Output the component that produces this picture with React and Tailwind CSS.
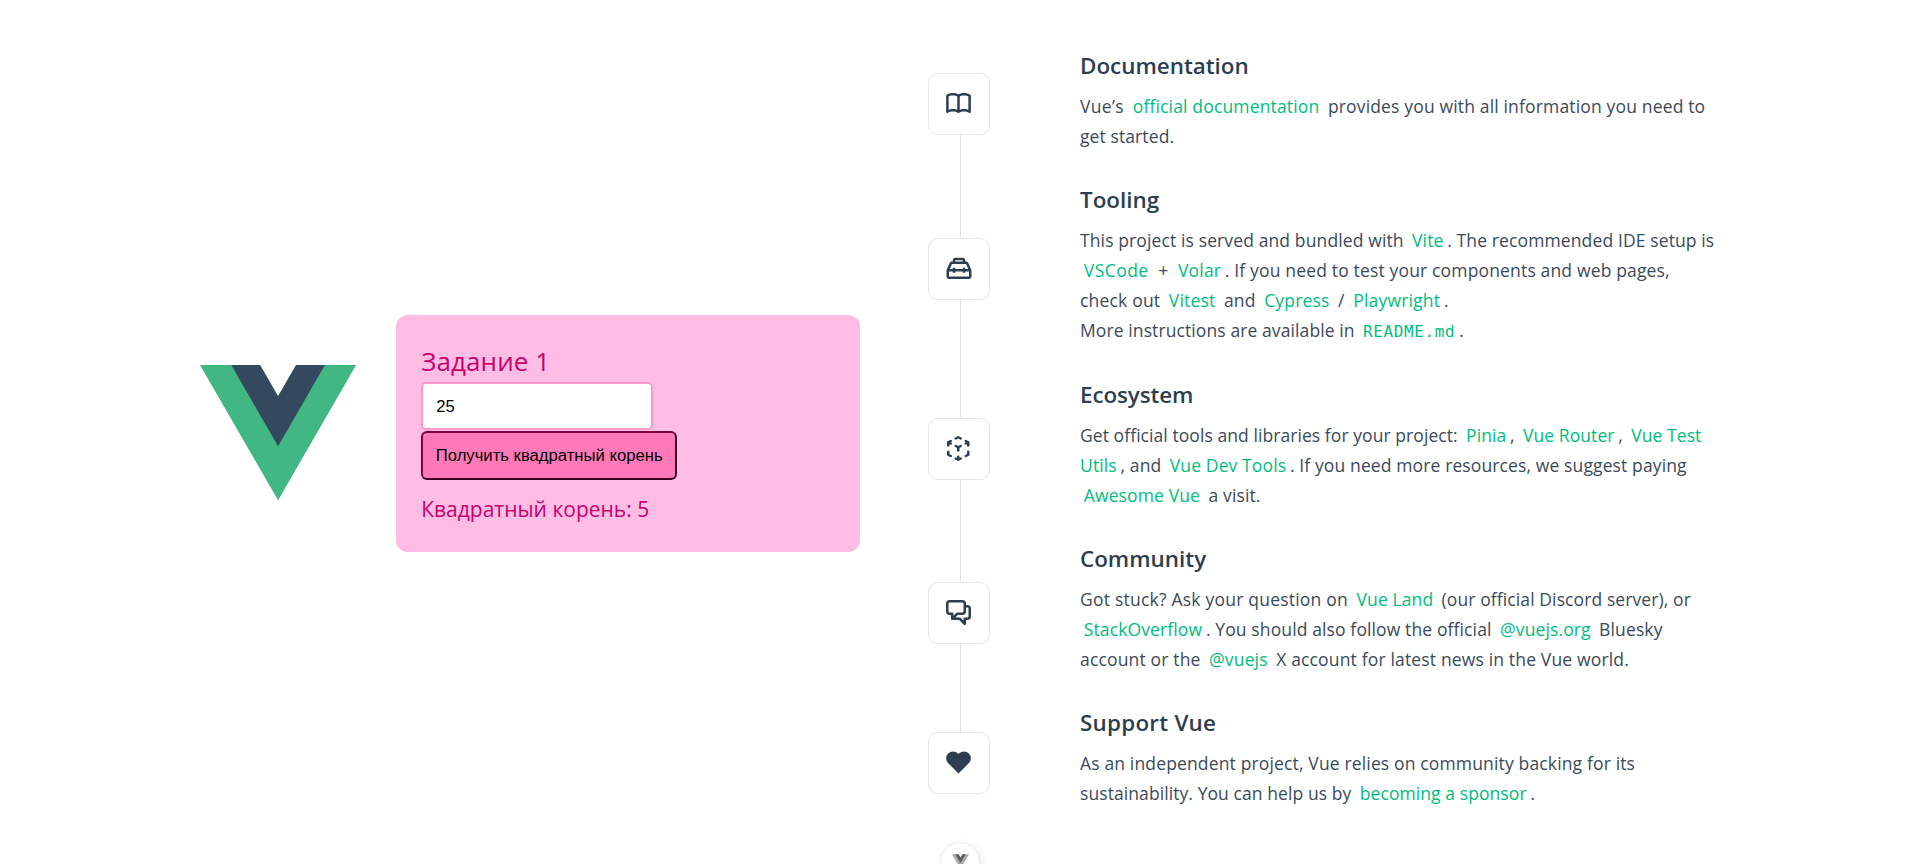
const ICONS = {
  documentation: {
    w: 20, h: 17, className: 'w-[25px] h-[21px]',
    d: 'M11 2.253a1 1 0 1 0-2 0h2zm-2 13a1 1 0 1 0 2 0H9zm.447-12.167a1 1 0 1 0 1.107-1.666L9.447 3.086zM1 2.253L.447 1.42A1 1 0 0 0 0 2.253h1zm0 13H0a1 1 0 0 0 1.553.833L1 15.253zm8.447.833a1 1 0 1 0 1.107-1.666l-1.107 1.666zm0-14.666a1 1 0 1 0 1.107 1.666L9.447 1.42zM19 2.253h1a1 1 0 0 0-.447-.833L19 2.253zm0 13l-.553.833A1 1 0 0 0 20 15.253h-1zm-9.553-.833a1 1 0 1 0 1.107 1.666L9.447 14.42zM9 2.253v13h2v-13H9zm1.553-.833C9.203.523 7.42 0 5.5 0v2c1.572 0 2.961.431 3.947 1.086l1.107-1.666zM5.5 0C3.58 0 1.797.523.447 1.42l1.107 1.666C2.539 2.431 3.928 2 5.5 2V0zM0 2.253v13h2v-13H0zm1.553 13.833C2.539 15.431 3.928 15 5.5 15v-2c-1.92 0-3.703.523-5.053 1.42l1.107 1.666zM5.5 15c1.572 0 2.961.431 3.947 1.086l1.107-1.666C9.203 13.523 7.42 13 5.5 13v2zm5.053-11.914C11.539 2.431 12.928 2 14.5 2V0c-1.92 0-3.703.523-5.053 1.42l1.107 1.666zM14.5 2c1.573 0 2.961.431 3.947 1.086l1.107-1.666C18.203.523 16.421 0 14.5 0v2zm3.5.253v13h2v-13h-2zm1.553 12.167C18.203 13.523 16.421 13 14.5 13v2c1.573 0 2.961.431 3.947 1.086l1.107-1.666zM14.5 13c-1.92 0-3.703.523-5.053 1.42l1.107 1.666C11.539 15.431 12.928 15 14.5 15v-2z',
  },
  tooling: {
    w: 24, h: 24, className: 'w-[30px] h-[30px]',
    d: 'M20 18v-4h-3v1h-2v-1H9v1H7v-1H4v4h16M6.33 8l-1.74 4H7v-1h2v1h6v-1h2v1h2.41l-1.74-4H6.33M9 5v1h6V5H9m12.84 7.61c.1.22.16.48.16.8V18c0 .53-.21 1-.6 1.41-.4.4-.85.59-1.4.59H4c-.55 0-1-.19-1.4-.59C2.21 19 2 18.53 2 18v-4.59c0-.32.06-.58.16-.8L4.5 7.22C4.84 6.41 5.45 6 6.33 6H7V5c0-.55.18-1 .57-1.41C7.96 3.2 8.44 3 9 3h6c.56 0 1.04.2 1.43.59.39.41.57.86.57 1.41v1h.67c.88 0 1.49.41 1.83 1.22l2.34 5.39z',
  },
  ecosystem: {
    w: 18, h: 20, className: 'w-[22.5px] h-[25px]',
    d: 'M11.447 8.894a1 1 0 1 0-.894-1.789l.894 1.789zm-2.894-.789a1 1 0 1 0 .894 1.789l-.894-1.789zm0 1.789a1 1 0 1 0 .894-1.789l-.894 1.789zM7.447 7.106a1 1 0 1 0-.894 1.789l.894-1.789zM10 9a1 1 0 1 0-2 0h2zm-2 2.5a1 1 0 1 0 2 0H8zm9.447-5.606a1 1 0 1 0-.894-1.789l.894 1.789zm-2.894-.789a1 1 0 1 0 .894 1.789l-.894-1.789zm2 .789a1 1 0 1 0 .894-1.789l-.894 1.789zm-1.106-2.789a1 1 0 1 0-.894 1.789l.894-1.789zM18 5a1 1 0 1 0-2 0h2zm-2 2.5a1 1 0 1 0 2 0h-2zm-5.447-4.606a1 1 0 1 0 .894-1.789l-.894 1.789zM9 1l.447-.894a1 1 0 0 0-.894 0L9 1zm-2.447.106a1 1 0 1 0 .894 1.789l-.894-1.789zm-6 3a1 1 0 1 0 .894 1.789L.553 4.106zm2.894.789a1 1 0 1 0-.894-1.789l.894 1.789zm-2-.789a1 1 0 1 0-.894 1.789l.894-1.789zm1.106 2.789a1 1 0 1 0 .894-1.789l-.894 1.789zM2 5a1 1 0 1 0-2 0h2zM0 7.5a1 1 0 1 0 2 0H0zm8.553 12.394a1 1 0 1 0 .894-1.789l-.894 1.789zm-1.106-2.789a1 1 0 1 0-.894 1.789l.894-1.789zm1.106 1a1 1 0 1 0 .894 1.789l-.894-1.789zm2.894.789a1 1 0 1 0-.894-1.789l.894 1.789zM8 19a1 1 0 1 0 2 0H8zm2-2.5a1 1 0 1 0-2 0h2zm-7.447.394a1 1 0 1 0 .894-1.789l-.894 1.789zM1 15H0a1 1 0 0 0 .553.894L1 15zm1-2.5a1 1 0 1 0-2 0h2zm12.553 2.606a1 1 0 1 0 .894 1.789l-.894-1.789zM17 15l.447.894A1 1 0 0 0 18 15h-1zm1-2.5a1 1 0 1 0-2 0h2zm-7.447-5.394l-2 1 .894 1.789 2-1-.894-1.789zm-1.106 1l-2-1-.894 1.789 2 1 .894-1.789zM8 9v2.5h2V9H8zm8.553-4.894l-2 1 .894 1.789 2-1-.894-1.789zm.894 0l-2-1-.894 1.789 2 1 .894-1.789zM16 5v2.5h2V5h-2zm-4.553-3.894l-2-1-.894 1.789 2 1 .894-1.789zm-2.894-1l-2 1 .894 1.789 2-1L8.553.106zM1.447 5.894l2-1-.894-1.789-2 1 .894 1.789zm-.894 0l2 1 .894-1.789-2-1-.894 1.789zM0 5v2.5h2V5H0zm9.447 13.106l-2-1-.894 1.789 2 1 .894-1.789zm0 1.789l2-1-.894-1.789-2 1 .894 1.789zM10 19v-2.5H8V19h2zm-6.553-3.894l-2-1-.894 1.789 2 1 .894-1.789zM2 15v-2.5H0V15h2zm13.447 1.894l2-1-.894-1.789-2 1 .894 1.789zM18 15v-2.5h-2V15h2z',
  },
  community: {
    w: 20, h: 20, className: 'w-[25px] h-[25px]',
    d: 'M15 4a1 1 0 1 0 0 2V4zm0 11v-1a1 1 0 0 0-1 1h1zm0 4l-.707.707A1 1 0 0 0 16 19h-1zm-4-4l.707-.707A1 1 0 0 0 11 14v1zm-4.707-1.293a1 1 0 0 0-1.414 1.414l1.414-1.414zm-.707.707l-.707-.707.707.707zM9 11v-1a1 1 0 0 0-.707.293L9 11zm-4 0h1a1 1 0 0 0-1-1v1zm0 4H4a1 1 0 0 0 1.707.707L5 15zm10-9h2V4h-2v2zm2 0a1 1 0 0 1 1 1h2a3 3 0 0 0-3-3v2zm1 1v6h2V7h-2zm0 6a1 1 0 0 1-1 1v2a3 3 0 0 0 3-3h-2zm-1 1h-2v2h2v-2zm-3 1v4h2v-4h-2zm1.707 3.293l-4-4-1.414 1.414 4 4 1.414-1.414zM11 14H7v2h4v-2zm-4 0c-.276 0-.525-.111-.707-.293l-1.414 1.414C5.42 15.663 6.172 16 7 16v-2zm-.707 1.121l3.414-3.414-1.414-1.414-3.414 3.414 1.414 1.414zM9 12h4v-2H9v2zm4 0a3 3 0 0 0 3-3h-2a1 1 0 0 1-1 1v2zm3-3V3h-2v6h2zm0-6a3 3 0 0 0-3-3v2a1 1 0 0 1 1 1h2zm-3-3H3v2h10V0zM3 0a3 3 0 0 0-3 3h2a1 1 0 0 1 1-1V0zM0 3v6h2V3H0zm0 6a3 3 0 0 0 3 3v-2a1 1 0 0 1-1-1H0zm3 3h2v-2H3v2zm1-1v4h2v-4H4zm1.707 4.707l.586-.586-1.414-1.414-.586.586 1.414 1.414z',
  },
  support: {
    w: 20, h: 20, className: 'w-[25px] h-[25px]',
    d: 'M10 3.22l-.61-.6a5.5 5.5 0 0 0-7.666.105 5.5 5.5 0 0 0-.114 7.665L10 18.78l8.39-8.4a5.5 5.5 0 0 0-.114-7.665 5.5 5.5 0 0 0-7.666-.105l-.61.61z',
  },
};

function IconBox({ name }) {
  const icon = ICONS[name];
  return (
    <div className="flex h-[62px] w-[62px] shrink-0 items-center justify-center rounded-[10px] border border-[#e6e6e6] bg-white pr-px pb-px">
      <svg className={icon.className} viewBox={`0 0 ${icon.w} ${icon.h}`} fill="currentColor">
        <path d={icon.d} />
      </svg>
    </div>
  );
}

function Line({ className }) {
  return <div className={`ml-[3px] w-px shrink-0 bg-[#e2e2e2] ${className}`} />;
}

function VueLogo({ className, outer = '#41b883', inner = '#34495e' }) {
  return (
    <svg className={className} viewBox="0 0 261.76 226.69">
      <path d="M161.096.001l-30.225 52.351L100.647.001H-.005l130.877 226.688L261.749.001z" fill={outer} />
      <path d="M161.096.001l-30.225 52.351L100.647.001H52.346l78.526 136.01L209.398.001z" fill={inner} />
    </svg>
  );
}

function Link({ children, className = 'px-[3.75px]' }) {
  return <a className={`inline-block text-[#00bd7e] ${className}`}>{children}</a>;
}

function Section({ title, className = '', titleClass = '', children }) {
  return (
    <section className={className}>
      <h3 className={`mb-[9px] text-[22.4px] leading-[32px] font-semibold text-[#2c3e50] ${titleClass}`}>{title}</h3>
      {children}
    </section>
  );
}

export default function App() {
  return (
    <div className="flex h-[864px] w-full overflow-hidden bg-white font-['Open_Sans','Noto_Sans',sans-serif] text-[#2c3e50]">
      <header className="flex w-[860px] shrink-0 pt-[315px] pl-[200px]">
        <VueLogo className="mt-[50px] mr-[40px] h-[135.3px] w-[156.2px] shrink-0" />
        <div className="flex h-[236.5px] w-[464px] flex-col items-start rounded-[12px] bg-[#ffbde6] px-[25px] pt-[25px] text-[#c7006b]">
          <h1 className="text-[26px] leading-[42px] tracking-[0.1px]">Задание 1</h1>
          <input
            className="h-[48px] w-[232px] rounded-[5px] border-2 border-[#f99aca] bg-white px-[13px] pt-px font-['Liberation_Sans',sans-serif] text-[16.67px] text-black outline-none"
            defaultValue="25"
          />
          <button className="mt-px h-[49px] w-[256px] rounded-[6px] border-2 border-t-[#7d0045] border-r-[#3a0020] border-b-[#3a0020] border-l-[#7d0045] bg-[#ff79b8] pb-px font-['Liberation_Sans',sans-serif] text-[16.67px] whitespace-nowrap text-black">
            Получить квадратный корень
          </button>
          <p className="mt-[11px] text-[21px] leading-[36px]">Квадратный корень: 5</p>
        </div>
      </header>

      <div className="ml-[68px] flex w-[62px] shrink-0 flex-col items-center pt-[73px]">
        <IconBox name="documentation" />
        <Line className="h-[103px]" />
        <IconBox name="tooling" />
        <Line className="h-[118px]" />
        <IconBox name="ecosystem" />
        <Line className="h-[102px]" />
        <IconBox name="community" />
        <Line className="h-[88px]" />
        <IconBox name="support" />
        <div className="mt-[48px] ml-[2px] flex h-[40px] w-[40px] shrink-0 justify-center rounded-full border border-[#ececec] bg-white pt-[11px] shadow-[2px_2px_8px_rgba(0,0,0,0.08)]">
          <VueLogo className="h-[15px] w-[17px]" outer="#a9a9a9" inner="#5c5c5c" />
        </div>
      </div>

      <main className="ml-[90px] w-[660px] shrink-0 pt-[50px] text-[17.5px] leading-[30px] whitespace-nowrap text-[#3b4a5a]">
        <Section title="Documentation">
          <p className="tracking-[0.16px]"><span className="tracking-[0.35px]">Vue’s </span><Link>official documentation</Link> provides you with all information you need to</p>
          <p className="tracking-[0.1px]">get started.</p>
        </Section>
        <Section title="Tooling" className="mt-[33px]">
          <p className="tracking-[0.12px]">This project is served and bundled with <Link>Vite</Link>. The recommended IDE setup is</p>
          <p className="tracking-[0.16px]"><Link className="px-[3.75px] tracking-[0.45px]">VSCode</Link><span className="px-[1.2px]"> + </span><Link>Volar</Link>. If you need to test your components and web pages,</p>
          <p className="tracking-[0.19px]">check out <Link>Vitest</Link> and <Link>Cypress</Link> / <Link>Playwright</Link>.</p>
          <p className="h-[30px] tracking-[0.1px]">More instructions are available in <Link><code className="font-['DejaVu_Sans_Mono',monospace] text-[16px] tracking-[0.6px]">README.md</code></Link>.</p>
        </Section>
        <Section title="Ecosystem" className="mt-[34px]" titleClass="tracking-[-0.1px]">
          <p className="tracking-[0.07px]">Get official tools and libraries for your project: <Link>Pinia</Link>, <Link>Vue Router</Link>, <Link>Vue Test</Link></p>
          <p className="tracking-[0.12px]"><Link className="pr-[3.75px]">Utils</Link>, and <Link>Vue Dev Tools</Link>. If you need more resources, we suggest paying</p>
          <p className="tracking-[0.13px]"><Link>Awesome Vue</Link> a visit.</p>
        </Section>
        <Section title="Community" className="mt-[33px]">
          <p className="tracking-[0.1px]"><span className="tracking-[0.22px]">Got stuck? Ask your question on </span><Link>Vue Land</Link> (our official Discord server), or</p>
          <p className="tracking-[0.12px]"><Link>StackOverflow</Link>. You should also follow the official <Link>@vuejs.org</Link> Bluesky</p>
          <p className="tracking-[0.16px]">account or the <Link>@vuejs</Link> X account for latest news in the Vue world.</p>
        </Section>
        <Section title="Support Vue" className="mt-[33px]" titleClass="tracking-[0.25px]">
          <p className="tracking-[0.15px]">As an independent project, Vue relies on community backing for its</p>
          <p className="tracking-[0.08px]">sustainability. You can help us by <Link>becoming a sponsor</Link>.</p>
        </Section>
      </main>
    </div>
  );
}
